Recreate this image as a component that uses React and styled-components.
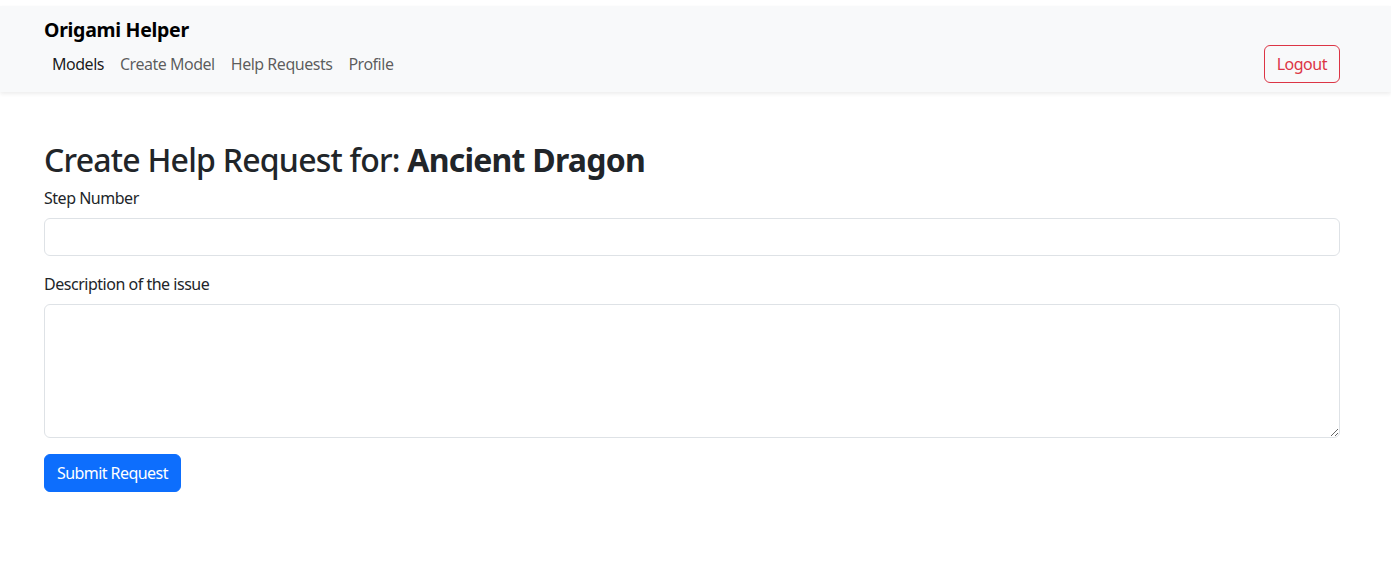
import React from "react";
import styled, { createGlobalStyle } from "styled-components";

const Global = createGlobalStyle`
  * { box-sizing: border-box; }
  body {
    margin: 0;
    background: #fff;
    color: #212529;
    font-family: "Noto Sans", "Open Sans", sans-serif;
    font-size: 16px;
    line-height: 1.5;
    letter-spacing: -0.03em;
  }
`;

const Navbar = styled.nav`
  margin-top: 6px;
  background: #f8f9fa;
  padding: 8px 0;
  box-shadow: 0 2px 4px rgba(0, 0, 0, 0.075);
`;

const Container = styled.div`
  width: 1296px;
  margin-left: 44px;
`;

const Brand = styled.div`
  font-size: 19.5px;
  font-weight: 700;
  line-height: 30px;
  padding-top: 1px;
  margin-bottom: -1px;
  letter-spacing: -0.015em;
  color: #000;
`;

const NavRow = styled.div`
  display: flex;
  align-items: center;
  justify-content: space-between;
  height: 40px;
`;

const NavLinks = styled.div`
  display: flex;
`;

const NavLink = styled.a`
  padding: 8px 8px;
  line-height: 24px;
  font-size: 16px;
  color: ${(p) => (p.$active ? "rgba(0,0,0,0.9)" : "rgba(0,0,0,0.65)")};
  text-decoration: none;
  cursor: pointer;
`;

const OutlineButton = styled.button`
  font-family: inherit;
  font-size: 16px;
  letter-spacing: inherit;
  line-height: 24px;
  padding: 6px 12px;
  height: 38px;
  border: 1px solid #dc3545;
  border-radius: 6px;
  color: #dc3545;
  background: transparent;
`;

const Main = styled(Container)`
  padding-top: 49px;
`;

const Title = styled.h2`
  margin: 0 0 7px;
  font-size: 32px;
  font-weight: 500;
  line-height: 1.2;
  letter-spacing: -0.024em;
  color: #212529;
`;

const Strong = styled.strong`
  font-weight: 700;
`;

const Field = styled.div`
  margin-bottom: 16px;
`;

const Label = styled.label`
  display: block;
  margin-bottom: 8px;
  font-size: 16px;
  line-height: 24px;
`;

const inputBase = `
  display: block;
  width: 100%;
  padding: 6px 12px;
  font-family: inherit;
  font-size: 16px;
  line-height: 24px;
  color: #212529;
  background: #fff;
  border: 1px solid #dee2e6;
  border-radius: 6px;
  outline: none;
`;

const Input = styled.input`
  ${inputBase}
  height: 38px;
`;

const TextArea = styled.textarea`
  ${inputBase}
  height: 134px;
  resize: vertical;
`;

const PrimaryButton = styled.button`
  font-family: inherit;
  font-size: 16px;
  letter-spacing: -0.035em;
  line-height: 24px;
  padding: 6px 12px;
  height: 38px;
  border: 1px solid #0d6efd;
  border-radius: 6px;
  background: #0d6efd;
  color: #fff;
`;

export default function App() {
  return (
    <>
      <Global />
      <Navbar>
        <Container>
          <Brand>Origami Helper</Brand>
          <NavRow>
            <NavLinks>
              <NavLink $active>Models</NavLink>
              <NavLink>Create Model</NavLink>
              <NavLink>Help Requests</NavLink>
              <NavLink>Profile</NavLink>
            </NavLinks>
            <OutlineButton>Logout</OutlineButton>
          </NavRow>
        </Container>
      </Navbar>
      <Main>
        <Title>
          Create Help Request for: <Strong>Ancient Dragon</Strong>
        </Title>
        <form onSubmit={(e) => e.preventDefault()}>
          <Field>
            <Label>Step Number</Label>
            <Input type="text" />
          </Field>
          <Field>
            <Label>Description of the issue</Label>
            <TextArea rows={5} />
          </Field>
          <PrimaryButton type="submit">Submit Request</PrimaryButton>
        </form>
      </Main>
    </>
  );
}
